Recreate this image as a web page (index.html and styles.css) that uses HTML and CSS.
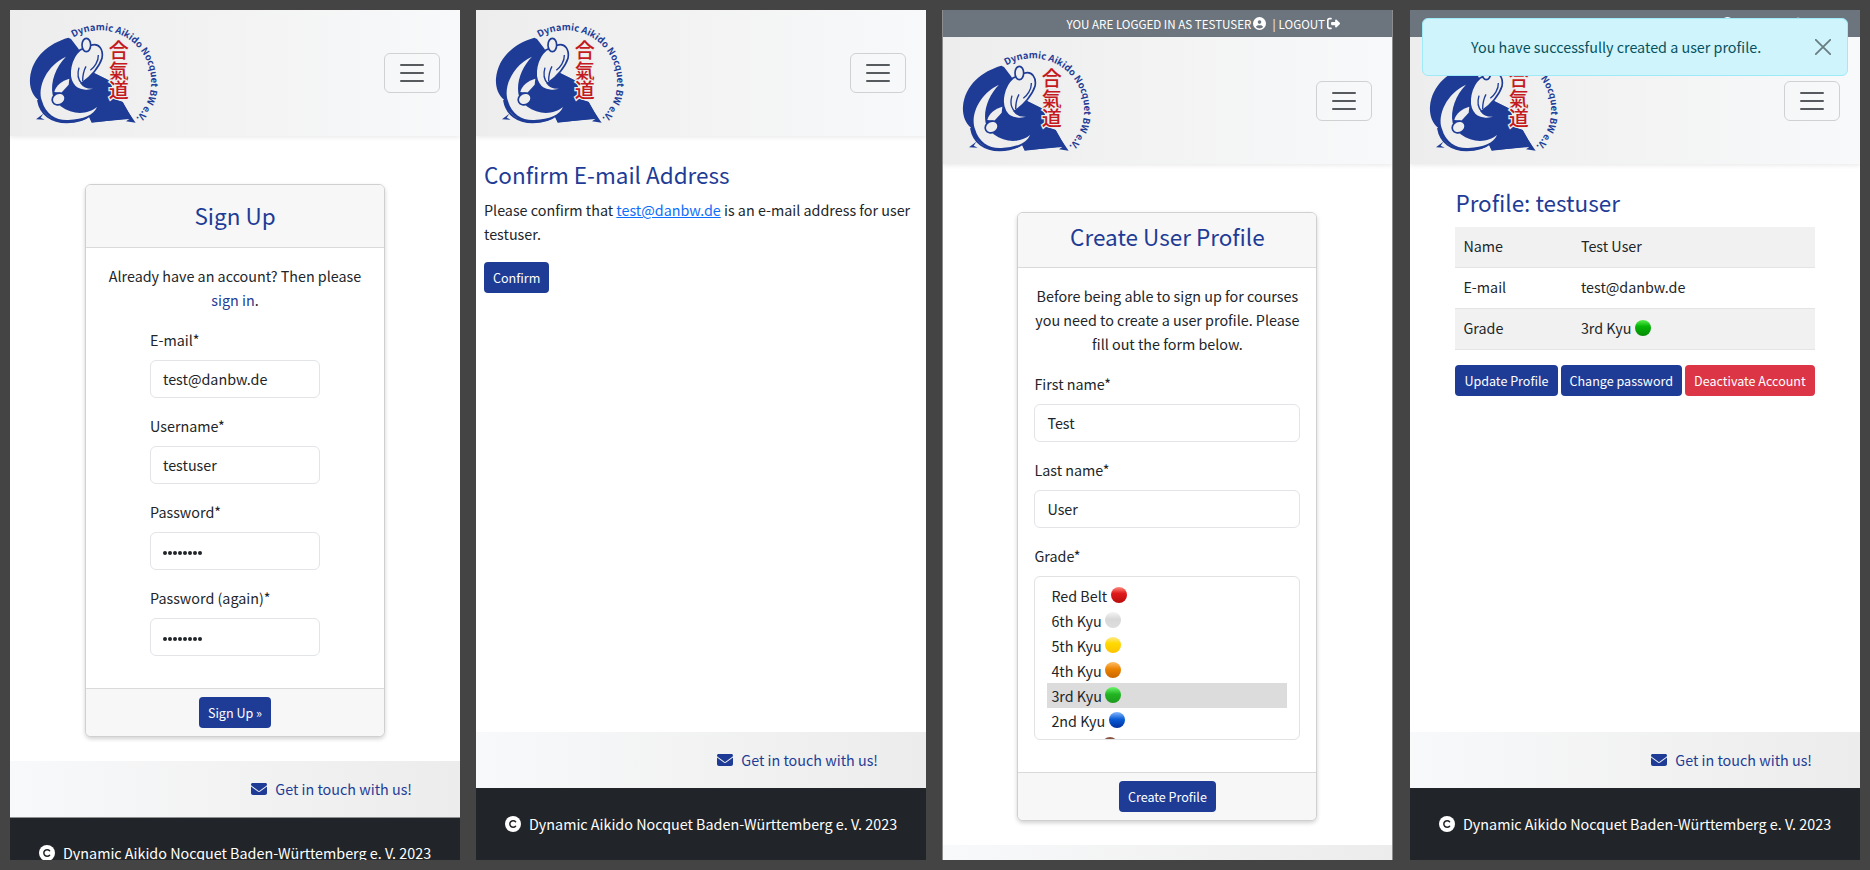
FILE: index.html
```html
<!DOCTYPE html>
<html lang="en">
<head>
<meta charset="utf-8">
<title>DANBW – Sign up flow</title>
<link rel="stylesheet" href="styles.css">
</head>
<body>
<svg class="defs" width="0" height="0" aria-hidden="true">
  <symbol id="logo" viewBox="0 0 435 345">
    <path fill="#1e3c96" d="M145 68 L153 72 L176 102 L195 178 L222 174 L272 199 L285 252 L308 261 L322 285 L336 309 L215 323 L207 306 C185 324 120 330 92 308 C68 292 58 275 54 254 C36 240 28 215 30 190 C36 125 88 84 145 68Z"/>
    <path fill="#1e3c96" d="M222 174 L272 199 L270 250 L308 261 L324 290 L347 323 L318 319 L328 312 L216 322 L205 300Z"/>
    <path fill="none" stroke="#1e3c96" stroke-width="6" d="M54 255 C62 300 95 322 140 322 C175 322 200 310 214 298"/>
    <path fill="#eee" d="M138 125 C82 150 50 215 66 258 C78 300 110 317 145 315 C190 313 222 300 231 276 C205 298 160 302 122 274 L98 240 C90 200 108 155 138 125Z"/>
    <path fill="#eee" d="M103 231 C108 210 125 198 148 191 L146 209 L124 233Z"/>
    <ellipse cx="116" cy="252" rx="20" ry="17" transform="rotate(-28 116 252)" fill="#eee" stroke="#1e3c96" stroke-width="5"/>
    <path fill="#eee" stroke="#1e3c96" stroke-width="5" d="M180 105 C152 128 142 180 158 205 C172 230 210 232 232 217 C218 220 195 221 184 205 C214 185 238 155 246 130 C251 105 237 82 213 91Z"/>
    <path fill="none" stroke="#1e3c96" stroke-width="4" d="M177 158 C171 178 176 196 185 205 M198 154 C188 172 188 188 188 198 M235 120 C236 140 222 158 211 166"/>
    <ellipse cx="199" cy="90" rx="13" ry="20" fill="#eee" stroke="#1e3c96" stroke-width="5"/>
    <path fill="#1e3c96" d="M48 313 L70 296 L62 308 L74 314Z"/>
    <path id="logo-arc" fill="none" d="M160 68 A154 154 0 1 1 240 354"/>
    <text class="logo-ring"><textPath href="#logo-arc" textLength="447">Dynamic Aikido Nocquet BW e.V.</textPath></text>
    <g class="logo-kanji">
      <text x="296" y="130">合</text>
      <text x="296" y="191">氣</text>
      <text x="296" y="250">道</text>
    </g>
  </symbol>
  <symbol id="burger" viewBox="0 0 30 30">
    <path d="M4 7h22M4 15h22M4 23h22" stroke="#212529" stroke-opacity=".75" stroke-width="2" stroke-linecap="round" stroke-miterlimit="10"/>
  </symbol>
  <symbol id="envelope" viewBox="0 0 512 512">
    <path fill="currentColor" d="M48 64C21.500 64 0 85.500 0 112c0 15.100 7.100 29.300 19.200 38.400L236.800 313.600c11.400 8.500 27 8.500 38.400 0L492.800 150.400c12.100-9.100 19.200-23.300 19.200-38.400c0-26.500-21.500-48-48-48H48zM0 176V384c0 35.300 28.700 64 64 64H448c35.300 0 64-28.700 64-64V176L294.400 339.200c-22.800 17.100-54 17.100-76.800 0L0 176z"/>
  </symbol>
  <symbol id="copyright" viewBox="0 0 16 16">
    <circle cx="8" cy="8" r="8" fill="#fff"/>
    <path d="M10.600 5.800A3.300 3.300 0 1 0 10.600 10.200" fill="none" stroke="#212529" stroke-width="1.500" stroke-linecap="round"/>
  </symbol>
  <symbol id="user" viewBox="0 0 512 512">
    <path fill="currentColor" d="M399 384.200C376.900 345.800 335.400 320 288 320H224c-47.400 0-88.900 25.800-111 64.200c35.200 39.200 86.200 63.800 143 63.800s107.800-24.700 143-63.800zM0 256a256 256 0 1 1 512 0A256 256 0 1 1 0 256zm256 16a72 72 0 1 0 0-144 72 72 0 1 0 0 144z"/>
  </symbol>
  <symbol id="logout" viewBox="0 0 512 512">
    <path fill="currentColor" d="M377.900 105.900L500.700 228.700c7.200 7.200 11.300 17.100 11.300 27.300s-4.100 20.100-11.300 27.300L377.900 406.100c-6.400 6.400-15 9.900-24 9.900c-18.700 0-33.900-15.200-33.900-33.900l0-62.100-128 0c-17.700 0-32-14.300-32-32l0-64c0-17.700 14.300-32 32-32l128 0 0-62.100c0-18.700 15.200-33.900 33.900-33.900c9 0 17.600 3.600 24 9.900zM160 96L96 96c-17.700 0-32 14.300-32 32l0 256c0 17.700 14.300 32 32 32l64 0c17.700 0 32 14.300 32 32s-14.300 32-32 32l-64 0c-53 0-96-43-96-96L0 128C0 75 43 32 96 32l64 0c17.700 0 32 14.300 32 32s-14.300 32-32 32z"/>
  </symbol>
</svg>

<main class="board">
  <section class="screen">
    <header class="navbar">
      <svg class="logo"><use href="#logo"/></svg>
      <button class="toggler"><svg><use href="#burger"/></svg></button>
    </header>
    <div class="content">
      <div class="card card-signup">
        <div class="card-head"><h3>Sign Up</h3></div>
        <div class="card-body">
          <p class="lead">Already have an account? Then please <a class="plain">sign in</a>.</p>
          <div class="fields narrow">
            <label>E-mail*</label><div class="input">test@danbw.de</div>
            <label>Username*</label><div class="input">testuser</div>
            <label>Password*</label><div class="input"><span class="dots"><i></i><i></i><i></i><i></i><i></i><i></i><i></i><i></i></span></div>
            <label>Password (again)*</label><div class="input"><span class="dots"><i></i><i></i><i></i><i></i><i></i><i></i><i></i><i></i></span></div>
          </div>
        </div>
        <div class="card-foot"><button class="btn">Sign Up »</button></div>
      </div>
    </div>
    <div class="contact"><svg><use href="#envelope"/></svg><span>Get in touch with us!</span></div>
    <footer class="legal edge"><svg><use href="#copyright"/></svg><span>Dynamic Aikido Nocquet Baden-Württemberg e. V. 2023</span></footer>
  </section>

  <section class="screen second">
    <header class="navbar">
      <svg class="logo"><use href="#logo"/></svg>
      <button class="toggler"><svg><use href="#burger"/></svg></button>
    </header>
    <div class="content grow confirm">
      <h3>Confirm E-mail Address</h3>
      <p>Please confirm that <a class="mail">test@danbw.de</a> is an e-mail address for user testuser.</p>
      <button class="btn">Confirm</button>
    </div>
    <div class="contact"><svg><use href="#envelope"/></svg><span>Get in touch with us!</span></div>
    <footer class="legal"><svg><use href="#copyright"/></svg><span>Dynamic Aikido Nocquet Baden-Württemberg e. V. 2023</span></footer>
  </section>

  <section class="screen third">
    <div class="userbar"><span class="who">YOU ARE LOGGED IN AS TESTUSER</span><svg><use href="#user"/></svg><span class="sep">|</span><span class="out">LOGOUT</span><svg><use href="#logout"/></svg></div>
    <header class="navbar">
      <svg class="logo"><use href="#logo"/></svg>
      <button class="toggler"><svg><use href="#burger"/></svg></button>
    </header>
    <div class="content">
      <div class="card card-profile">
        <div class="card-head"><h3>Create User Profile</h3></div>
        <div class="card-body">
          <p class="lead">Before being able to sign up for courses you need to create a user profile. Please fill out the form below.</p>
          <div class="fields">
            <label>First name*</label><div class="input">Test</div>
            <label>Last name*</label><div class="input">User</div>
            <label>Grade*</label>
            <div class="listbox">
              <div class="option">Red Belt<i class="ball red"></i></div>
              <div class="option">6th Kyu<i class="ball white"></i></div>
              <div class="option">5th Kyu<i class="ball yellow"></i></div>
              <div class="option">4th Kyu<i class="ball orange"></i></div>
              <div class="option selected">3rd Kyu<i class="ball green"></i></div>
              <div class="option">2nd Kyu<i class="ball blue"></i></div>
              <div class="option"><i class="ball brown"></i></div>
            </div>
          </div>
        </div>
        <div class="card-foot"><button class="btn">Create Profile</button></div>
      </div>
    </div>
    <div class="contact"></div>
  </section>

  <section class="screen fourth">
    <div class="userbar"><span class="who">YOU ARE LOGGED IN AS TESTUSER</span><svg><use href="#user"/></svg><span class="sep">|</span><span class="out">LOGOUT</span><svg><use href="#logout"/></svg></div>
    <header class="navbar">
      <svg class="logo"><use href="#logo"/></svg>
      <button class="toggler"><svg><use href="#burger"/></svg></button>
    </header>
    <div class="content grow profile">
      <h3>Profile: testuser</h3>
      <div class="table">
        <div class="row odd"><span>Name</span><span>Test User</span></div>
        <div class="row"><span>E-mail</span><span>test@danbw.de</span></div>
        <div class="row odd"><span>Grade</span><span>3rd Kyu<i class="ball green deep"></i></span></div>
      </div>
      <div class="actions">
        <button class="btn">Update Profile</button>
        <button class="btn">Change password</button>
        <button class="btn danger">Deactivate Account</button>
      </div>
    </div>
    <div class="contact"><svg><use href="#envelope"/></svg><span>Get in touch with us!</span></div>
    <footer class="legal"><svg><use href="#copyright"/></svg><span>Dynamic Aikido Nocquet Baden-Württemberg e. V. 2023</span></footer>
    <div class="alert">
      <span>You have successfully created a user profile.</span>
      <svg viewBox="0 0 16 16"><path d="M.8.8l14.400 14.400M15.200.8L.8 15.200" stroke="#6a7d80" stroke-width="1.800" stroke-linecap="round"/></svg>
    </div>
  </section>
</main>
</body>
</html>
```
FILE: styles.css
```css
* { box-sizing: border-box; }
body {
  margin: 0;
  background: #444;
  font-family: "Noto Sans CJK JP", "Noto Sans", sans-serif;
  font-size: 14.330px;
  line-height: 24px;
  color: #212529;
}
h3, p { margin: 0; font-weight: 400; }
button { font-family: inherit; margin: 0; }
.defs { position: absolute; }

.board { display: flex; width: 1870px; height: 870px; padding: 10px 0 10px 10px; overflow: hidden; }
.screen {
  position: relative;
  flex: none;
  display: flex;
  flex-direction: column;
  width: 450px;
  height: 850px;
  overflow: hidden;
  background: #fff;
}
.second { margin-left: 16px; }
.third { margin-left: 16px; width: 451px; border: solid #8c8c8c; border-width: 0 1px; }
.fourth { margin-left: 17px; }

.userbar {
  flex: none;
  display: flex;
  align-items: center;
  height: 27px;
  padding-left: 124px;
  background: #6c757d;
  color: #fff;
  font-size: 11.600px;
}
.third .userbar { padding-left: 123.500px; }
.userbar svg { width: 13px; height: 13px; margin-left: 2px; }
.sep { margin: 0 3px 0 6px; }

.navbar {
  flex: none;
  z-index: 1;
  display: flex;
  justify-content: space-between;
  align-items: center;
  height: 126px;
  padding: 0 20px 1px 10px;
  background: linear-gradient(90deg, #ededed, #f8f9fa);
  box-shadow: 0 2px 4px rgba(0, 0, 0, .075);
}
.third .navbar, .fourth .navbar { height: 127px; padding-bottom: 0; }
.third .navbar { padding-left: 9.500px; padding-right: 20px; }
.logo { width: 145px; height: 115px; }
.logo-ring { font-size: 28px; font-weight: 700; fill: #1e3c96; }
.logo-kanji { font-size: 60px; font-weight: 500; fill: #c41920; text-anchor: middle; paint-order: stroke; stroke: #eee; stroke-width: 8px; }
.toggler {
  display: grid;
  place-items: center;
  width: 56px;
  height: 40px;
  padding: 0;
  border: 1px solid #cfd1d2;
  border-radius: 6px;
  background: none;
}
.toggler svg { width: 30px; height: 30px; }

.content { flex: none; }
.grow { flex: 1; }
h3 { font-size: 22.500px; line-height: 30px; color: #1e3c96; }

.card {
  width: 300px;
  margin: 48px auto 24px 75px;
  border: 1px solid #d0d0d1;
  border-radius: 6px;
  background: #fff;
  box-shadow: 0 2px 4px rgba(0, 0, 0, .18);
}
.card-profile { margin-left: 74.400px; }
.card-head { border-bottom: 1px solid #dadada; background: #f7f7f7; border-radius: 5px 5px 0 0; text-align: center; }
.card-signup .card-head { height: 63px; padding-top: 15px; }
.card-profile .card-head { height: 55px; padding-top: 8px; }
.card-body { padding: 16px; }
.lead { text-align: center; margin-bottom: 16px; }
.plain { color: #1e3c96; }
.narrow { width: 170px; margin: 0 auto; }
label { display: block; margin-bottom: 8px; }
.input {
  display: flex;
  align-items: center;
  height: 38px;
  margin-bottom: 16px;
  padding: 0 12px;
  border: 1px solid #e2e4e8;
  border-radius: 6px;
}
.dots { display: flex; gap: 1px; padding-top: 3px; }
.dots i { width: 4px; height: 4px; border-radius: 50%; background: #212529; }
.card-foot { height: 48px; padding-top: 8px; border-top: 1px solid #dadada; background: #f7f7f7; border-radius: 0 0 5px 5px; display: flex; justify-content: center; }
.btn {
  height: 31px;
  padding: 0 9px;
  border: 0;
  border-radius: 4px;
  background: #1e3c96;
  color: #fff;
  font-size: 12.550px;
  line-height: 30px;
  white-space: nowrap;
}
.danger { background: #dc3545; }

.listbox { height: 164px; margin-bottom: 16px; padding: 6px 12px; border: 1px solid #e2e2e4; border-radius: 6px; overflow: hidden; }
.option { display: flex; align-items: center; height: 25px; padding-left: 4px; }
.selected { background: #dcdcdc; }
.ball { display: inline-block; width: 16px; height: 16px; margin-left: 3.500px; border-radius: 50%; }
.option .ball { margin-top: -1px; }
.red { background: linear-gradient(#ff8a80, #e01b1b 40%, #b80d0d); }
.white { background: linear-gradient(#f4f4f4, #d8d8d8 45%, #dedede); }
.yellow { background: linear-gradient(#ffe98a, #ffd900 40%, #ffc400); }
.orange { background: linear-gradient(#ffbd66, #ea8300 45%, #c96500); }
.green { background: linear-gradient(#6cf56c, #22b522 45%, #1d9a1d); }
.deep { background: linear-gradient(#59ee4f, #05b405 40%, #058a05); }
.blue { background: linear-gradient(#82b8ff, #0a5cd6 45%, #0030a0); }
.brown { margin-left: 51px; background: linear-gradient(#8a5544, #6b3a2a); }

.contact {
  flex: none;
  display: flex;
  align-items: center;
  justify-content: flex-end;
  gap: 8px;
  height: 56px;
  padding-right: 48px;
  background: linear-gradient(90deg, #f8f9fa, #ececec);
  color: #1e3c96;
}
.contact svg { width: 16px; height: 16px; }
.legal {
  flex: none;
  display: flex;
  align-items: center;
  gap: 8px;
  height: 72px;
  padding-left: 29px;
  background: #212529;
  color: #fff;
  white-space: nowrap;
}
.legal span { font-size: 14.330px; }
.legal svg { width: 16px; height: 16px; }
.edge { height: 71px; border-top: 1px solid #8d8f91; }

.confirm { padding: 23px 8px 0; }
.confirm p { margin: 9px 0 16px; }
.confirm .btn { display: block; }
.mail { color: #0d6efd; text-decoration: underline; }

.profile { padding: 23px 45.400px 0; }
.table { margin-top: 10px; }
.row { display: flex; height: 41px; padding: 7px 8px 0; border-bottom: 1px solid #e3e4e5; }
.row span:first-child { width: 117.500px; }
.row .ball { vertical-align: -2px; }
.odd { background: #f1f1f1; }
.actions { display: flex; gap: 3px; margin-top: 15px; }

.alert {
  position: absolute;
  z-index: 2;
  left: 12px;
  top: 8px;
  display: flex;
  align-items: center;
  justify-content: space-between;
  width: 426px;
  height: 58px;
  padding: 0 16px 0 48px;
  border: 1px solid #9eeaf9;
  border-radius: 6px;
  background: #cff4fc;
  color: #055160;
}
.alert svg { width: 16px; height: 16px; }
```
